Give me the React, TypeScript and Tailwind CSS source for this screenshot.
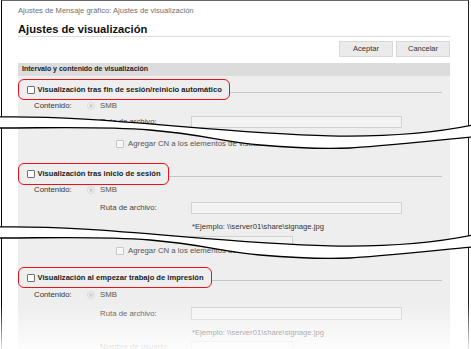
import React from "react";

const font = "font-['Liberation_Sans',Arial,sans-serif]";

function Checkbox({ disabled }: { disabled?: boolean }) {
  return (
    <span
      className={
        disabled
          ? "block w-[8px] h-[8px] shrink-0 rounded-[1px] border border-[#c8c8c8] bg-[#f7f7f7]"
          : "block w-[8px] h-[8px] shrink-0 rounded-[1px] border border-[#707070] bg-white"
      }
    />
  );
}

function Radio() {
  return (
    <span className="flex w-[8px] h-[8px] shrink-0 items-center justify-center rounded-full border border-[#d8d8d8] bg-[#f3f3f3]">
      <span className="block w-[4px] h-[4px] rounded-full bg-[#d2d2d2]" />
    </span>
  );
}

function TitleRow({ label, className }: { label: string; className: string }) {
  return (
    <div className={"flex shrink-0 items-center h-[21px] " + className}>
      <div className="flex h-full items-center gap-[3px] rounded-[6px] border-[1.5px] border-[#e8121a] pl-[7.5px] pr-[7px]">
        <Checkbox />
        <span className="text-[7.6px] font-bold text-[#222] whitespace-nowrap">{label}</span>
      </div>
      <div className="flex-1 h-px bg-[#c6c6c6] mt-[5px] mr-[8px]" />
    </div>
  );
}

function ContenidoRow({ className }: { className: string }) {
  return (
    <div className={"flex shrink-0 items-center pl-[16px] text-[7.8px] " + className}>
      <span className="w-[53px] text-[#333]">Contenido:</span>
      <Radio />
      <span className="ml-[5px] text-[#555]">SMB</span>
    </div>
  );
}

function RutaRow({ className, label = "Ruta de archivo:", w = "w-[211px]" }: { className: string; label?: string; w?: string }) {
  return (
    <div className={"flex shrink-0 items-center pl-[82px] text-[7.8px] " + className}>
      <span className="w-[91px] text-[#444] whitespace-nowrap">{label}</span>
      <span className={"block h-full border border-[#d2d2d2] bg-[#f3f3f3] " + w} />
    </div>
  );
}

function EjemploRow({ className }: { className: string }) {
  return (
    <div className={"flex shrink-0 items-center pl-[174px] text-[7.7px] text-[#333] whitespace-nowrap " + className}>
      *Ejemplo: \\server01\share\signage.jpg
    </div>
  );
}

function AgregarRow({ className }: { className: string }) {
  return (
    <div className={"flex shrink-0 items-center gap-[4px] pl-[98px] text-[7.8px] text-[#555] " + className}>
      <Checkbox disabled />
      <span className="whitespace-nowrap">Agregar CN a los elementos de visualización</span>
    </div>
  );
}

function Tears() {
  const top = "M-2 117 C145 114 330 155 473 125";
  const bottom =
    "M-2 128 C50 128 100 126 150 130 C200 134 225 142 260 145 C295 148 330 149 350 148 C370 147 430 141 473 137";
  const fill =
    "M-2 117 C145 114 330 155 473 125 L473 137 C430 141 370 147 350 148 C330 149 295 148 260 145 C225 142 200 134 150 130 C100 126 50 128 -2 128 Z";
  return (
    <svg className="absolute left-0 top-0 pointer-events-none" width="471" height="349" viewBox="0 0 471 349">
      {[0, 110].map((dy) => (
        <g key={dy} transform={`translate(0 ${dy})`}>
          <path d={fill} fill="#ffffff" />
          <path d={top} fill="none" stroke="#000" strokeWidth="1.3" />
          <path d={bottom} fill="none" stroke="#000" strokeWidth="1.3" />
        </g>
      ))}
    </svg>
  );
}

export default function App() {
  return (
    <div className={"relative w-[471px] h-[349px] overflow-hidden bg-white " + font}>
      <div className="ml-[1px] flex h-[349px] w-[468px] flex-col overflow-hidden border-l border-r border-t border-l-black border-r-[#222] border-t-[#666] pl-[16px] pr-[18px]">
        <div className="mt-[5px] h-[10px] shrink-0 leading-[10px] text-[7.6px] text-[#707070] whitespace-nowrap">
          Ajustes de Mensaje gráfico: Ajustes de visualización
        </div>
        <div className="mt-[6px] h-[14px] shrink-0 leading-[14px] text-[11.2px] font-bold text-[#111]">
          Ajustes de visualización
        </div>
        <div className="h-px shrink-0 bg-[#dcdcdc]" />
        <div className="mt-[4px] flex shrink-0 justify-end gap-[3px]">
          <button className="h-[16px] w-[54px] border border-[#d8d8d8] bg-[#ebebeb] text-[7.5px] text-[#333]">Aceptar</button>
          <button className="h-[16px] w-[54px] border border-[#d8d8d8] bg-[#ebebeb] text-[7.5px] text-[#333]">Cancelar</button>
        </div>
        <div className="mt-[6px] flex h-[13px] shrink-0 items-center bg-[#dcdcdc] pl-[4px] text-[7px] font-bold text-[#222]">
          Intervalo y contenido de visualización
        </div>
        <div className="flex min-h-0 flex-1 flex-col overflow-hidden bg-[#eeeeee]">
          <TitleRow label="Visualización tras fin de sesión/reinicio automático" className="mt-[3px]" />
          <ContenidoRow className="h-[11px]" />
          <RutaRow className="mt-[5px] h-[12px]" />

          <AgregarRow className="mt-[11px] h-[10px]" />
          <TitleRow label="Visualización tras inicio de sesión" className="mt-[14px] h-[22px]" />
          <ContenidoRow className="h-[10px]" />
          <RutaRow className="mt-[7px] h-[12px]" />
          <EjemploRow className="mt-[7px] h-[12px]" />
          <RutaRow className="mt-[3px] h-[10px]" label="" w="w-[102px]" />

          <AgregarRow className="mt-[0px] h-[10px]" />
          <TitleRow label="Visualización al empezar trabajo de impresión" className="mt-[11px]" />
          <ContenidoRow className="mt-[1px] h-[12px]" />
          <RutaRow className="mt-[6px] h-[13px]" />
          <EjemploRow className="mt-[7px] h-[12px]" />
          <RutaRow className="mt-[2px] h-[12px]" label="Nombre de usuario:" w="w-[102px]" />
        </div>
      </div>
      <Tears />
      <div className="absolute bottom-0 left-0 h-[46px] w-full bg-linear-to-b from-white/0 to-white/90 pointer-events-none" />
    </div>
  );
}
